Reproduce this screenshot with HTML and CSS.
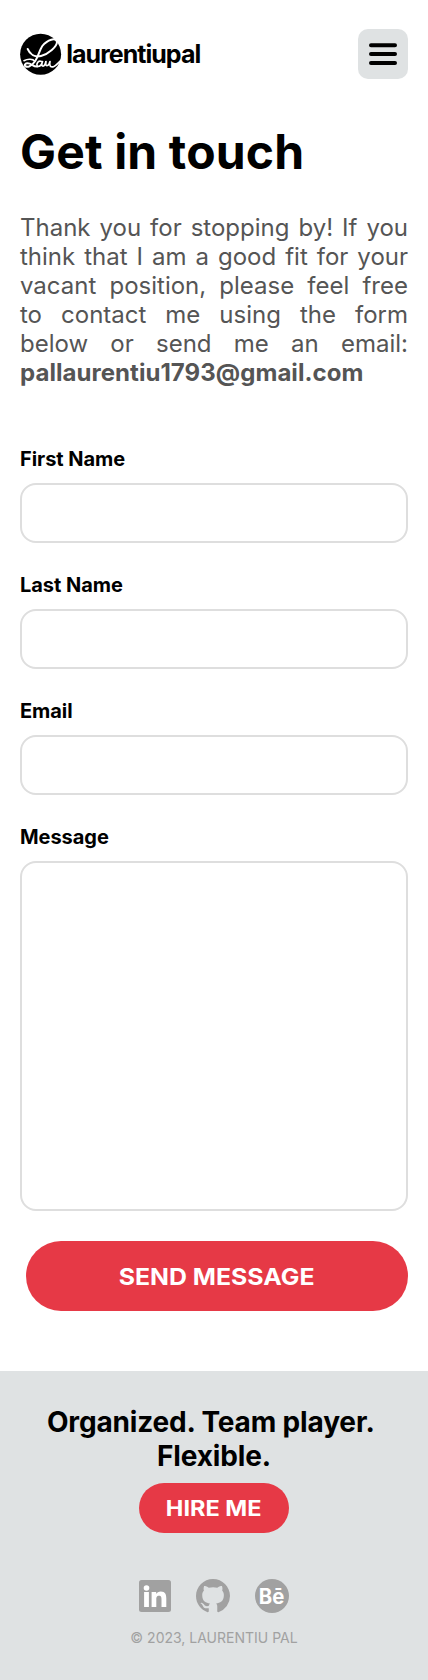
FILE: index.html
```html
<!DOCTYPE html>
<html lang="en">
<head>
<meta charset="utf-8">
<meta name="viewport" content="width=device-width, initial-scale=1">
<title>Get in touch – Laurentiu Pal</title>
<link rel="stylesheet" href="styles.css">
</head>
<body>
<header class="header">
  <a class="logo" aria-label="laurentiupal">
    <svg width="200" height="50" viewBox="0 0 200 50">
      <circle cx="20.6" cy="25.3" r="20.5"/>
      <g class="signature">
        <path d="M7.700 20C10 25.500 15 28.500 21 27C28.500 25 37 17.500 37 13C36 8 27.500 10.500 22.300 17C18 23.500 17.500 34 9 37.500C6 38.500 3 36.500 6 34.500C10.500 32.500 13 38.500 17.500 37.500" stroke-width="2"/>
        <path d="M4 31.700C8 29.500 13 30 14.500 32M21.500 32.500C17.500 31 15.500 36.500 18 37.500C20.500 37.500 22 34.500 22.500 32.500C21.500 35 21.500 37.500 23.500 37C25 36.500 25.500 34.500 26 32.500C25.500 35.500 25.500 37 27.500 36.500C29 36 29.500 34.500 30 32.500C29 36.500 30.500 38.500 33.500 37.700C36.500 36.500 38 34 41.500 31" stroke-width="1.700"/>
      </g>
      <text class="wordmark" x="46.200" y="34.300" textLength="135" lengthAdjust="spacing">laurentiupal</text>
    </svg>
  </a>
  <button class="menu" aria-label="Menu">
    <svg width="28" height="24" viewBox="0 0 28 24">
      <path d="M2 3.300H26M2 12.100H26M2 20.900H26"/>
    </svg>
  </button>
</header>
<main class="main">
  <h1 class="title">Get in touch</h1>
  <p class="intro">Thank you for stopping by! If you think that I am a good fit for your vacant position, please feel free to contact me using the form below or send me an email: <strong>pallaurentiu1793@gmail.com</strong></p>
  <form class="form">
    <label class="field">First Name<input class="control" type="text"></label>
    <label class="field">Last Name<input class="control" type="text"></label>
    <label class="field">Email<input class="control" type="email"></label>
    <label class="field">Message<textarea class="control message"></textarea></label>
    <button class="button send" type="button"><span class="send-text">SEND MESSAGE</span></button>
  </form>
</main>
<footer class="footer">
  <h2 class="tagline">Organized. Team player.&nbsp;<br>Flexible.</h2>
  <button class="button hire" type="button"><span class="hire-text">HIRE ME</span></button>
  <nav class="social">
    <a aria-label="LinkedIn"><svg width="32" height="34" viewBox="0 0 32 34">
      <rect y="1" width="32" height="32" rx="2.500"/>
      <g fill="#fff"><circle cx="7.500" cy="9" r="2.800"/><rect x="5.100" y="13" width="4.800" height="15"/><path d="M12.600 13h4.600v2.100c.8-1.500 2.400-2.500 4.600-2.500 4.600 0 5.500 3 5.500 7V28h-4.800v-7.300c0-1.800 0-4-2.500-4s-2.700 1.900-2.700 3.900V28h-4.700z"/></g>
    </svg></a>
    <a aria-label="GitHub"><svg width="34" height="34" viewBox="0 0 16 16"><path d="M8 0C3.580 0 0 3.580 0 8c0 3.540 2.290 6.530 5.470 7.590.4.070.55-.17.55-.38 0-.19-.01-.82-.01-1.490-2.010.37-2.530-.49-2.690-.94-.09-.23-.48-.94-.82-1.130-.28-.15-.68-.52-.01-.53.63-.01 1.080.58 1.230.82.72 1.210 1.870.87 2.330.66.070-.52.28-.87.51-1.070-1.780-.2-3.640-.89-3.640-3.950 0-.87.31-1.590.82-2.150-.08-.2-.36-1.020.08-2.120 0 0 .67-.21 2.200.82.64-.18 1.320-.27 2-.27s1.360.09 2 .27c1.530-1.040 2.200-.82 2.200-.82.44 1.100.16 1.920.08 2.120.51.56.82 1.270.82 2.150 0 3.070-1.870 3.750-3.650 3.950.29.25.54.73.54 1.480 0 1.070-.01 1.930-.01 2.200 0 .21.15.46.55.38A8.010 8.010 0 0 0 16 8c0-4.420-3.580-8-8-8z"/></svg></a>
    <a aria-label="Behance"><svg width="34" height="34" viewBox="0 0 34 34"><circle cx="17" cy="17" r="17"/><text class="behance" x="3.800" y="25" textLength="25.500" lengthAdjust="spacingAndGlyphs">Bē</text></svg></a>
  </nav>
  <p class="copyright">© 2023, LAURENTIU PAL</p>
</footer>
</body>
</html>
```
FILE: styles.css
```css
* { box-sizing: border-box; }

body {
  margin: 0;
  background: #fff;
  color: #000;
  font-family: Inter, "Liberation Sans", sans-serif;
}

.header {
  display: flex;
  justify-content: space-between;
  padding: 29px 20px 0;
}

.logo, .logo svg, .social svg { display: block; }

.logo svg { overflow: visible; }

.signature {
  fill: none;
  stroke: #fff;
  stroke-linecap: round;
  stroke-linejoin: round;
}

.wordmark {
  font-size: 25px;
  font-weight: 700;
}

.menu {
  display: grid;
  place-items: center;
  width: 50px;
  height: 50px;
  padding: 0;
  border: 0;
  border-radius: 10px;
  background: #dfe2e3;
}

.menu path {
  stroke: #000;
  stroke-width: 4;
  stroke-linecap: round;
}

.main { padding: 44px 20px 60px; }

.title {
  margin: 0 0 32px;
  font-size: 48px;
  font-weight: 700;
  line-height: 58px;
  letter-spacing: 0.15px;
}

.intro {
  margin: 0 0 60px;
  color: #555;
  font-size: 24px;
  font-weight: 400;
  line-height: 29px;
  text-align: justify;
}

.intro strong {
  font-weight: 700;
  letter-spacing: 0.05px;
}

.form {
  display: flex;
  flex-direction: column;
  gap: 30px;
}

.field {
  display: flex;
  flex-direction: column;
  gap: 12px;
  font-size: 20px;
  font-weight: 700;
  line-height: 24px;
  letter-spacing: -0.05px;
}

.control {
  width: 100%;
  height: 60px;
  border: 2px solid #dedede;
  border-radius: 16px;
  background: #fff;
  font: inherit;
}

.message {
  height: 350px;
  resize: none;
}

.button {
  padding: 0;
  border: 0;
  background: #e63946;
  color: #fff;
  font-family: Inter, "Liberation Sans", sans-serif;
  font-weight: 700;
}

.send {
  height: 70px;
  margin-left: 6px;
  border-radius: 35px;
  font-size: 23px;
}

.send-text {
  display: inline-block;
  padding-top: 2px;
  transform: scaleX(1.08);
}

.footer {
  display: flex;
  flex-direction: column;
  align-items: center;
  height: 309px;
  padding: 34px 20px 0;
  background: #dfe2e3;
}

.tagline {
  margin: 0 0 10px;
  font-size: 28px;
  font-weight: 700;
  line-height: 34px;
  letter-spacing: -0.15px;
  text-align: center;
}

.hire {
  width: 150px;
  height: 50px;
  border-radius: 25px;
  font-size: 21px;
}

.hire-text {
  display: inline-block;
  transform: scaleX(1.12);
}

.social {
  display: flex;
  gap: 25px;
  margin: 46px 0 16px;
  fill: #a1a1a1;
}

.behance {
  fill: #fff;
  font-size: 21px;
  font-weight: 700;
}

.copyright {
  margin: 0;
  color: #a1a1a1;
  font-size: 14px;
  line-height: 17px;
}
```
